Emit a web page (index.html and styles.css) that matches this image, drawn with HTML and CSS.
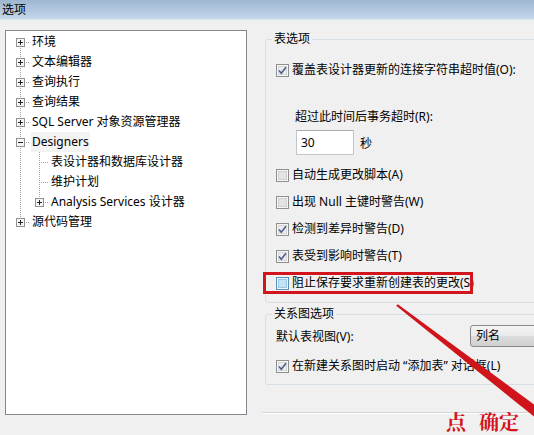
FILE: index.html
```html
<!DOCTYPE html>
<html lang="zh-CN">
<head>
<meta charset="utf-8">
<title>选项</title>
<link rel="stylesheet" href="styles.css">
</head>
<body>
<svg class="defs" width="0" height="0" aria-hidden="true">
  <defs>
    <symbol id="cb-off" viewBox="0 0 13 13">
      <rect x="0.5" y="0.5" width="12" height="12" fill="#f7f7f7" stroke="#8e8f8f"/>
      <rect x="2.5" y="2.5" width="8" height="8" fill="#e3e3e3" stroke="#cfcfcf"/>
    </symbol>
    <symbol id="cb-on" viewBox="0 0 13 13">
      <rect x="0.5" y="0.5" width="12" height="12" fill="#f7f7f7" stroke="#8e8f8f"/>
      <rect x="2.5" y="2.5" width="8" height="8" fill="#ececec" stroke="#d6d6d6"/>
      <path d="M3 6.4 L5.3 9.2 L10 3.2" fill="none" stroke="#4a5f8f" stroke-width="1.6"/>
    </symbol>
    <symbol id="cb-hot" viewBox="0 0 13 13">
      <rect x="0.5" y="0.5" width="12" height="12" fill="#eaf6fd" stroke="#5a8fb8"/>
      <rect x="2.5" y="2.5" width="8" height="8" fill="#c4e2f6" stroke="#9cc8e8"/>
    </symbol>
    <symbol id="tv-plus" viewBox="0 0 9 9">
      <rect x="0.5" y="0.5" width="8" height="8" fill="#f6f6f6" stroke="#919191"/>
      <path d="M2 4.5h5M4.5 2v5" stroke="#222" stroke-width="1"/>
    </symbol>
    <symbol id="tv-minus" viewBox="0 0 9 9">
      <rect x="0.5" y="0.5" width="8" height="8" fill="#f6f6f6" stroke="#919191"/>
      <path d="M2 4.5h5" stroke="#222" stroke-width="1"/>
    </symbol>
  </defs>
</svg>

<div class="window">
  <div class="titlebar">选项</div>
  <div class="content">
    <div class="tree">
      <div class="row"><span class="conn"><svg class="tbox"><use href="#tv-plus"/></svg></span><span class="label">环境</span></div>
      <div class="row"><span class="conn"><svg class="tbox"><use href="#tv-plus"/></svg></span><span class="label">文本编辑器</span></div>
      <div class="row"><span class="conn"><svg class="tbox"><use href="#tv-plus"/></svg></span><span class="label">查询执行</span></div>
      <div class="row"><span class="conn"><svg class="tbox"><use href="#tv-plus"/></svg></span><span class="label">查询结果</span></div>
      <div class="row"><span class="conn"><svg class="tbox"><use href="#tv-plus"/></svg></span><span class="label">SQL Server 对象资源管理器</span></div>
      <div class="row"><span class="conn"><svg class="tbox"><use href="#tv-minus"/></svg></span><span class="label selected">Designers</span></div>
      <div class="children">
        <div class="row"><span class="conn"></span><span class="label">表设计器和数据库设计器</span></div>
        <div class="row"><span class="conn"></span><span class="label">维护计划</span></div>
        <div class="row"><span class="conn"><svg class="tbox"><use href="#tv-plus"/></svg></span><span class="label">Analysis Services 设计器</span></div>
      </div>
      <div class="row"><span class="conn"><svg class="tbox"><use href="#tv-plus"/></svg></span><span class="label">源代码管理</span></div>
    </div>

    <div class="pane">
      <fieldset class="group g1">
        <legend>表选项</legend>
        <div class="check first"><svg class="cb"><use href="#cb-on"/></svg><span>覆盖表设计器更新的连接字符串超时值(O):</span></div>
        <div class="sublabel">超过此时间后事务超时(R):</div>
        <div class="spin"><span class="input">30</span><span class="unit">秒</span></div>
        <div class="check gap12"><svg class="cb"><use href="#cb-off"/></svg><span>自动生成更改脚本(A)</span></div>
        <div class="check gap11"><svg class="cb"><use href="#cb-off"/></svg><span>出现 Null 主键时警告(W)</span></div>
        <div class="check gap11"><svg class="cb"><use href="#cb-on"/></svg><span>检测到差异时警告(D)</span></div>
        <div class="check gap11"><svg class="cb"><use href="#cb-on"/></svg><span>表受到影响时警告(T)</span></div>
        <div class="check gap11 hl"><svg class="cb"><use href="#cb-hot"/></svg><span>阻止保存要求重新创建表的更改(S)</span></div>
      </fieldset>

      <fieldset class="group g2">
        <legend>关系图选项</legend>
        <div class="viewrow">
          <span class="viewlabel">默认表视图(V):</span>
          <span class="combo">列名</span>
        </div>
        <div class="check gap11"><svg class="cb"><use href="#cb-on"/></svg><span>在新建关系图时启动 “添加表” 对话框(L)</span></div>
      </fieldset>

      <div class="sep"></div>
    </div>
  </div>

  <svg class="arrow" width="534" height="435" viewBox="0 0 534 435" aria-hidden="true">
    <polygon points="397.8,304.2 396.2,305.8 537,419 543,411" fill="#d0141c"/>
  </svg>
  <div class="note">点 确定</div>
</div>
</body>
</html>
```

FILE: styles.css
```css
* {
  box-sizing: border-box;
}

html,
body {
  margin: 0;
  padding: 0;
}

body {
  width: 534px;
  height: 435px;
  overflow: hidden;
  background: #f0f0f0;
  color: #000;
  font-family: "Segoe UI", "Noto Sans", "Noto Sans CJK SC", sans-serif;
  font-size: 12px;
}

.defs {
  position: absolute;
  width: 0;
  height: 0;
  overflow: hidden;
}

.window {
  position: relative;
  width: 534px;
  height: 435px;
  overflow: hidden;
}

.titlebar {
  height: 20px;
  line-height: 19px;
  padding-left: 2px;
  background: linear-gradient(#9fb6d0, #c4d7eb);
  border-bottom: 1px solid #dce7f3;
  font-size: 12px;
}

.content {
  display: flex;
  align-items: flex-start;
  padding: 10px 0 0 5px;
}

/* ---------- tree ---------- */
.tree {
  flex: none;
  width: 242px;
  height: 385px;
  border: 1px solid #828790;
  padding: 1px 0 0 5px;
  background-color: #fff;
  background-image: repeating-linear-gradient(to bottom, #a5a5a5 0 1px, transparent 1px 2px);
  background-repeat: no-repeat;
  background-size: 1px 180px;
  background-position: 14px 11px;
}

.row {
  display: flex;
  align-items: flex-start;
  height: 20px;
  line-height: 20px;
  white-space: nowrap;
}

.conn {
  flex: none;
  display: block;
  width: 18px;
  height: 20px;
  padding: 6px 0 0 5px;
  background-image: repeating-linear-gradient(to right, #a5a5a5 0 1px, transparent 1px 2px);
  background-repeat: no-repeat;
  background-size: 9px 1px;
  background-position: right 0 top 10px;
}

.tbox {
  display: block;
  width: 9px;
  height: 9px;
}

.label {
  margin-left: 2px;
  padding: 0 1px;
}

.label.selected {
  background: #f3f3f3;
}

.children {
  padding-left: 19px;
  background-image: repeating-linear-gradient(to bottom, #a5a5a5 0 1px, transparent 1px 2px);
  background-repeat: no-repeat;
  background-size: 1px 50px;
  background-position: 28px 0;
}

/* ---------- right pane ---------- */
.pane {
  flex: none;
  width: 300px;
  margin-left: 15px;
}

.group {
  min-width: 0;
  margin: 0 0 0 3px;
  padding: 0 0 0 6px;
  border: 1px solid #d5dfe5;
  border-radius: 3px;
}

.group legend {
  padding: 0 2px;
  height: 16px;
  line-height: 16px;
}

.g1 {
  margin-top: 1px;
  padding-bottom: 11px;
}

.g2 {
  margin-top: 3px;
  padding-bottom: 10px;
}

.check {
  display: flex;
  align-items: flex-start;
  height: 16px;
  line-height: 16px;
  margin-left: 4px;
  white-space: nowrap;
}

.check.first {
  margin-top: 15px;
}

.gap11 {
  margin-top: 11px;
}

.gap12 {
  margin-top: 12px;
}

.cb {
  flex: none;
  display: block;
  width: 13px;
  height: 13px;
  margin: 2px 3px 0 0;
}

.check.hl {
  width: 204px;
  margin-left: -6px;
  padding-left: 10px;
  outline: 3px solid #d2141d;
}

.sublabel {
  margin: 31px 0 0 23px;
  height: 16px;
  line-height: 16px;
}

.spin {
  display: flex;
  align-items: center;
  margin: 5px 0 0 24px;
}

.input {
  display: block;
  width: 58px;
  height: 25px;
  line-height: 23px;
  padding-left: 4px;
  background: #fff;
  border: 1px solid #c2c7cf;
  border-top-color: #a9aeb6;
}

.unit {
  margin-left: 6px;
}

.viewrow {
  display: flex;
  align-items: center;
  height: 22px;
  margin: 3px 0 0 4px;
}

.viewlabel {
  flex: none;
  width: 194px;
}

.combo {
  flex: none;
  display: block;
  width: 90px;
  height: 22px;
  line-height: 20px;
  padding-left: 5px;
  border: 1px solid #8a8a8a;
  border-radius: 3px;
  background: linear-gradient(#f4f4f4 0, #eaeaea 50%, #dcdcdc 51%, #d0d0d0 100%);
}

.sep {
  height: 2px;
  margin-top: 27px;
  border-top: 1px solid #d5d5d5;
  border-bottom: 1px solid #fff;
}

/* ---------- annotation overlay ---------- */
.arrow {
  position: absolute;
  left: 0;
  top: 0;
}

.note {
  position: absolute;
  left: 446px;
  top: 410px;
  color: #d3121a;
  font-family: "Noto Serif CJK SC", "Noto Sans CJK SC", serif;
  font-weight: bold;
  font-size: 20px;
  line-height: 24px;
  word-spacing: 8px;
  white-space: nowrap;
}
```
